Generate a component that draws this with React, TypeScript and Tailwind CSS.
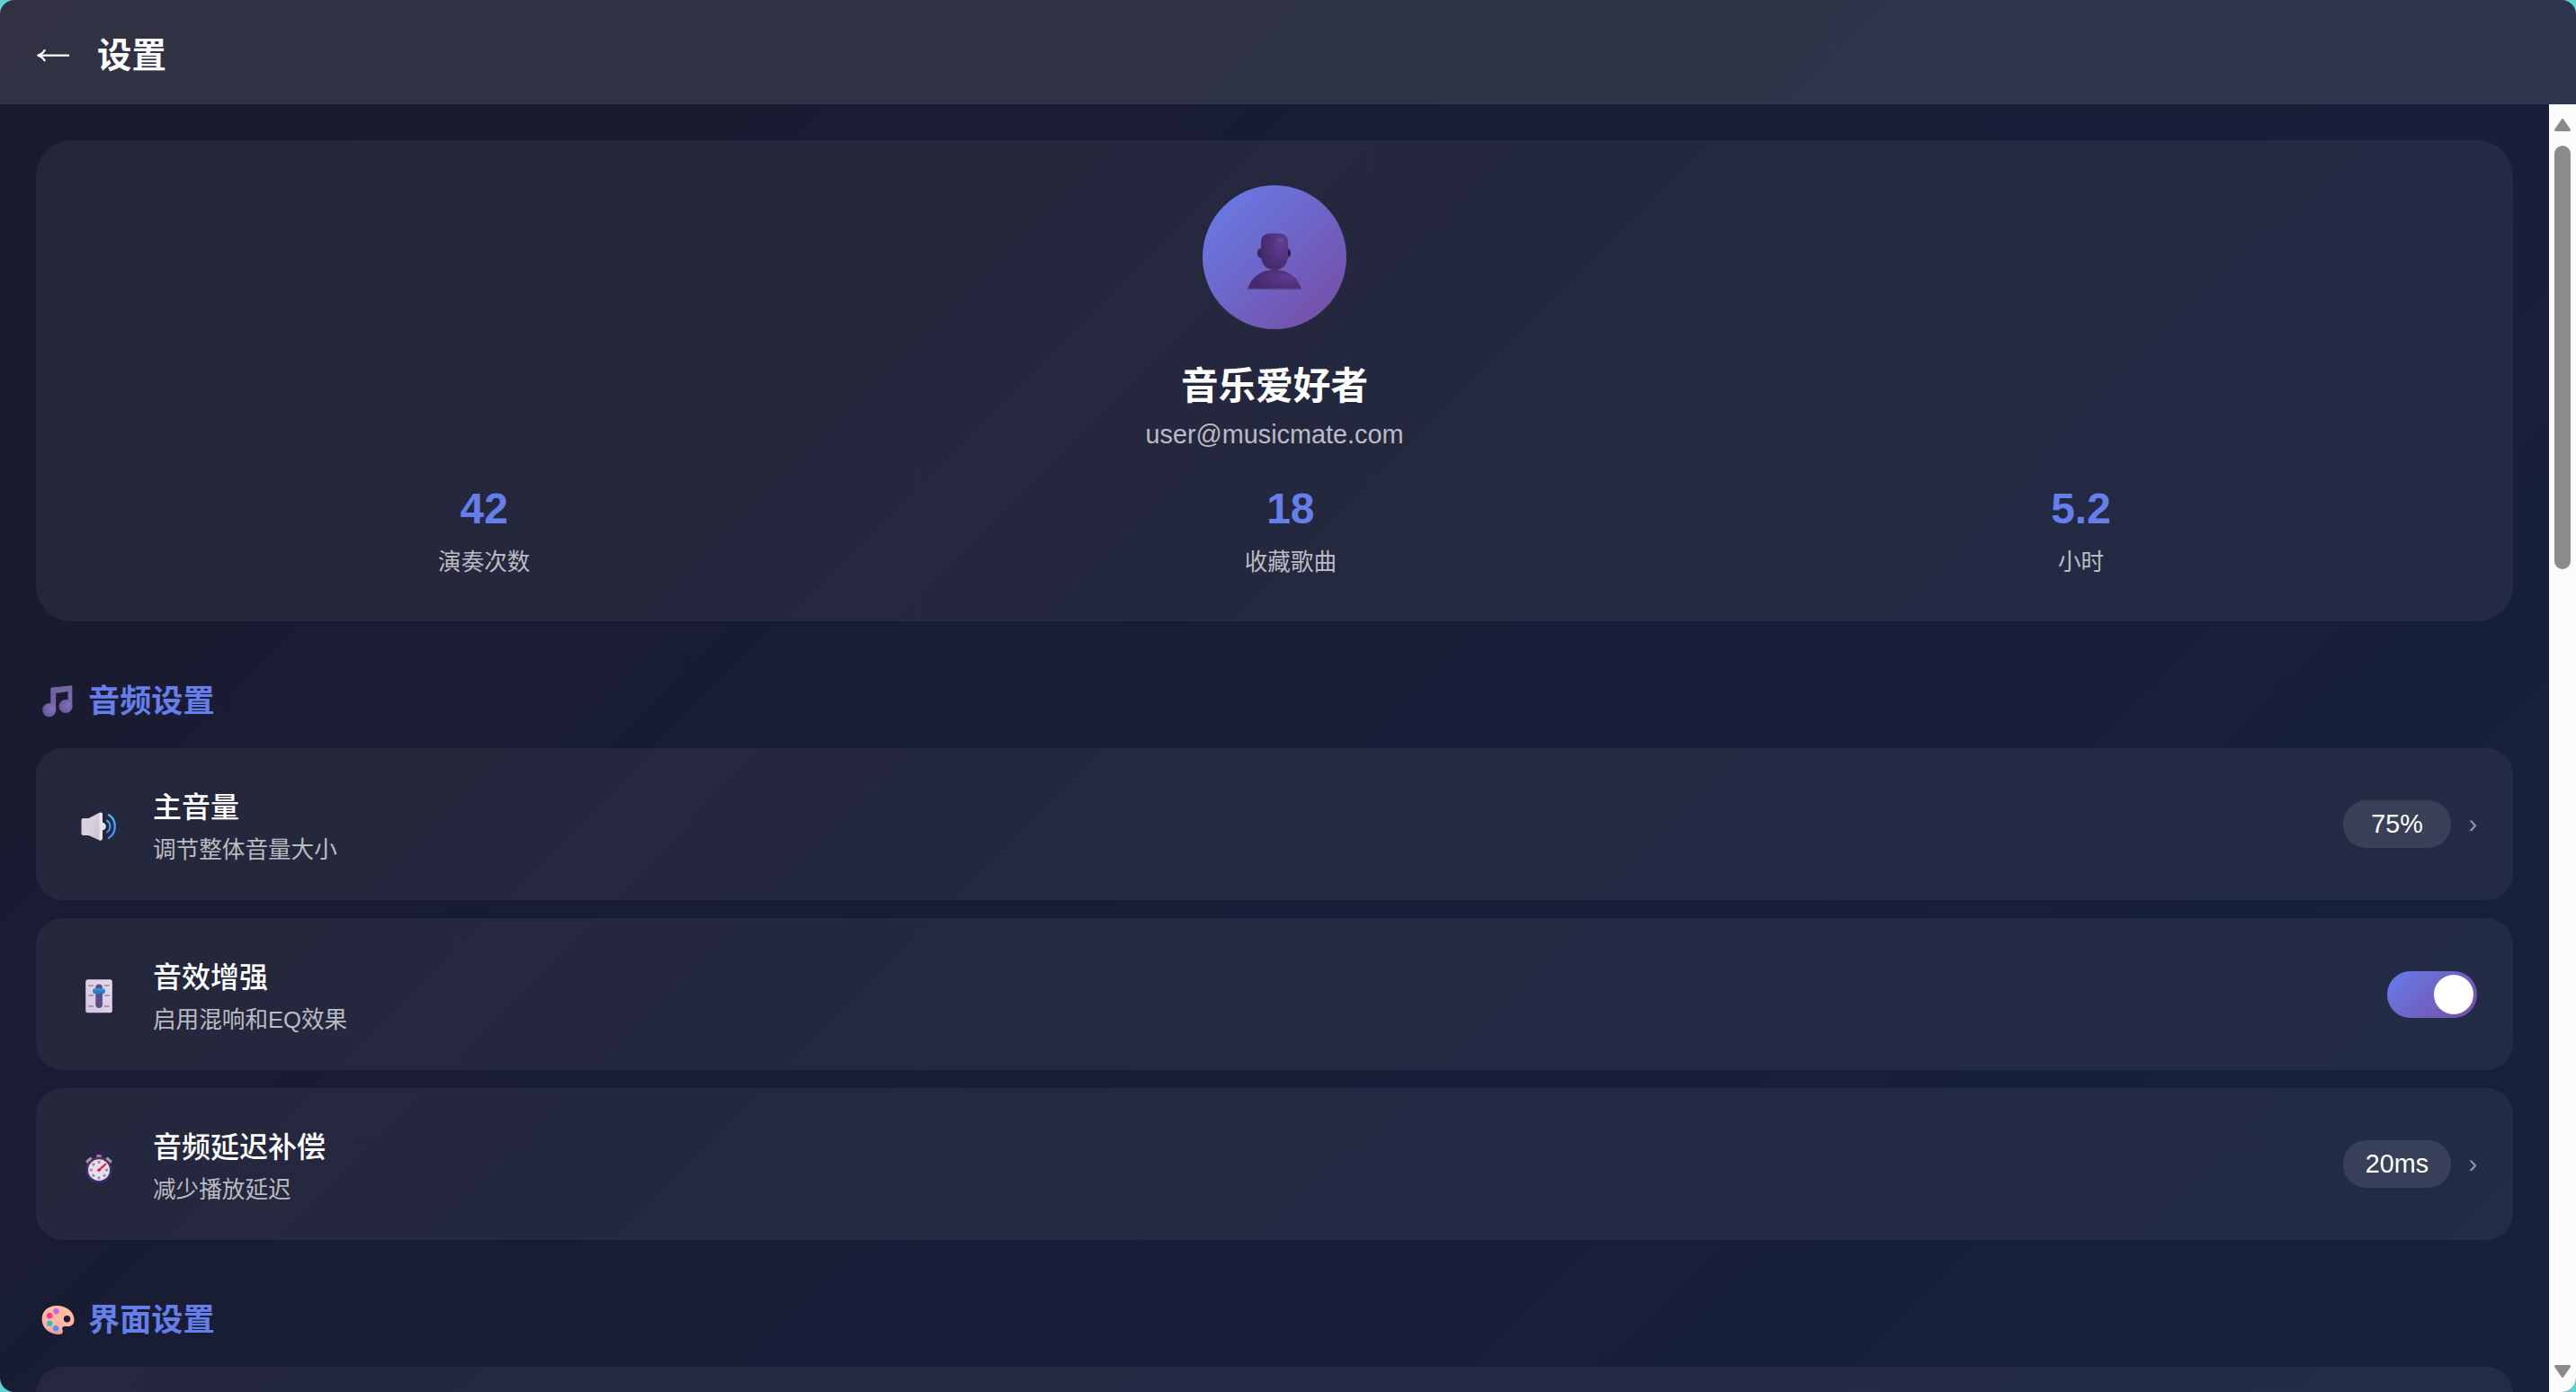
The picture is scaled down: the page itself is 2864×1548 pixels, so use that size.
import React from "react";

function BackArrow() {
  return (
    <svg className="h-[16px] w-[38px]" viewBox="0 0 38 16" fill="none">
      <path d="M3 7.7H37" stroke="#fff" strokeWidth="2.3" />
      <path d="M10 1.2C8.200 4.600 5.200 6.900 2 7.700C5.200 8.500 8.200 10.600 10 14" stroke="#fff" strokeWidth="2.3" />
      <path d="M.6 7.7L5 5.600V9.800Z" fill="#fff" />
    </svg>
  );
}

function PersonIcon() {
  return (
    <svg className="h-[64px] w-[60px]" viewBox="0 0 60 64">
      <defs>
        <radialGradient id="head" cx=".75" cy=".3" r=".75">
          <stop offset="0" stopColor="#603c93" />
          <stop offset="1" stopColor="#462a6b" />
        </radialGradient>
        <radialGradient id="shine">
          <stop offset="0" stopColor="#71509f" />
          <stop offset="1" stopColor="#603c93" stopOpacity="0" />
        </radialGradient>
        <radialGradient id="torso" cx=".75" cy=".4" r=".7">
          <stop offset="0" stopColor="#5e3b90" />
          <stop offset="1" stopColor="#45296a" />
        </radialGradient>
      </defs>
      <ellipse cx="14.500" cy="22.500" rx="3.700" ry="5.200" fill="#3b2463" />
      <ellipse cx="45" cy="22.500" rx="3.300" ry="5" fill="#3f286b" />
      <ellipse cx="45.600" cy="22.500" rx="1.500" ry="3" fill="#281848" />
      <path d="M0 63C4 48 16 41 30 41S56 48 60 63Z" fill="url(#torso)" />
      <path d="M0 63L.5 61.500H59.500L60 63Z" fill="#5a4090" />
      <path d="M15 11Q15 .5 26 .5H34Q45 .5 45 11V25Q44 41 30 41T15 25Z" fill="url(#head)" />
      <ellipse cx="37" cy="8" rx="7" ry="4" fill="url(#shine)" />
    </svg>
  );
}

function MusicIcon() {
  return (
    <svg className="h-[36px] w-[34px]" viewBox="0 0 34 36">
      <defs>
        <radialGradient id="note" cx=".7" cy=".4" r=".7">
          <stop offset="0" stopColor="#8570c2" />
          <stop offset="1" stopColor="#665699" />
        </radialGradient>
        <linearGradient id="stem" x1="0" y1="0" x2="1" y2="1">
          <stop offset="0" stopColor="#6d5f9e" />
          <stop offset="1" stopColor="#7b6eb0" />
        </linearGradient>
      </defs>
      <path d="M9.300 4Q9.300 2.700 10.600 2.500L33.300 .2V23H28.500V7L15.200 9V28H9.300Z" fill="url(#stem)" />
      <path d="M10 3.500L33 1.500V5L10 7.500Z" fill="#78669f" opacity=".7" />
      <ellipse cx="7.700" cy="27.600" rx="7.500" ry="7.600" fill="url(#note)" />
      <ellipse cx="26" cy="23.500" rx="7.600" ry="7.500" fill="url(#note)" />
    </svg>
  );
}

function PaletteIcon() {
  return (
    <svg className="h-[34px] w-[37px]" viewBox="0 0 37 34">
      <defs>
        <linearGradient id="wood" x1="0" y1="0" x2="0" y2="1">
          <stop offset="0" stopColor="#ffbd9e" />
          <stop offset=".8" stopColor="#ffb2a5" />
          <stop offset="1" stopColor="#e88f9b" />
        </linearGradient>
      </defs>
      <path
        fillRule="evenodd"
        d="M17 1C28 1 36.500 8 36.500 16.500C36.500 21.500 33.500 24.300 29 24H25.500C23.200 24.300 22.500 26 23.600 28.300C24.600 31 23.300 33 20 33C9 33 .6 26 .6 16C.6 7.500 7 1 17 1ZM28.500 12A3.700 3.700 0 1 0 28.600 19.400A3.700 3.700 0 1 0 28.500 12Z"
        fill="url(#wood)"
      />
      <circle cx="16.500" cy="7.200" r="3.200" fill="#c267f0" />
      <circle cx="9.200" cy="12.200" r="3.200" fill="#f63b8c" />
      <circle cx="9.200" cy="20.700" r="3.200" fill="#43b9b7" />
      <circle cx="16" cy="26.300" r="3.300" fill="#4a9bf5" />
    </svg>
  );
}

function SpeakerIcon() {
  return (
    <svg className="h-[32px] w-[40px]" viewBox="0 0 40 32">
      <defs>
        <linearGradient id="cone" x1="0" y1="0" x2="1" y2="1">
          <stop offset="0" stopColor="#dcd8df" />
          <stop offset="1" stopColor="#cbbfd3" />
        </linearGradient>
        <linearGradient id="wave" x1="0" y1="0" x2="0" y2="1">
          <stop offset="0" stopColor="#4cb4fa" />
          <stop offset="1" stopColor="#3f87ea" />
        </linearGradient>
      </defs>
      <path d="M.5 9Q.5 7 2.500 7H9V26H2.500Q.5 26 .5 24Z" fill="#d8d0dd" />
      <path d="M8.500 7L20 .9Q24 -.4 24 3.500V28Q24 32.500 20 31.200L8.500 26Z" fill="url(#cone)" />
      <path d="M20.500 1Q24 -.3 24 3.500V28Q24 32.500 20.500 31.200Z" fill="#e9e4ec" />
      <path d="M24 11.500Q27.800 12.500 27.800 16T24 20.500Z" fill="#e5e0ea" />
      <path d="M29 9.500Q32.500 12 32.500 16T29 22.500" fill="none" stroke="url(#wave)" strokeWidth="2" strokeLinecap="round" />
      <path d="M31 3.200C40 8.500 40 23.500 31 28.800" fill="none" stroke="url(#wave)" strokeWidth="2.400" strokeLinecap="round" />
    </svg>
  );
}

function SliderIcon() {
  return (
    <svg className="h-[38px] w-[30px]" viewBox="0 0 30 38">
      <defs>
        <linearGradient id="panel" x1="1" y1="0" x2="0" y2="1">
          <stop offset="0" stopColor="#e2dbe9" />
          <stop offset="1" stopColor="#d6c4e6" />
        </linearGradient>
        <linearGradient id="knob" x1="0" y1="0" x2="0" y2="1">
          <stop offset="0" stopColor="#359bd6" />
          <stop offset="1" stopColor="#2a6fc0" />
        </linearGradient>
      </defs>
      <rect x=".2" y=".3" width="29.600" height="37" rx="2.500" fill="url(#panel)" />
      <path d="M4 7H8.500M21.500 7H26M4 18H8.500M21.500 18H26M4 30H8.500M21.500 30H26" stroke="#93899f" strokeWidth="1.600" strokeLinecap="round" />
      <rect x="11.300" y="5.500" width="7.600" height="26.500" rx="3.800" fill="#5d4b85" />
      <rect x="8" y="10" width="14" height="6.200" rx="3.100" fill="url(#knob)" />
    </svg>
  );
}

function StopwatchIcon() {
  return (
    <svg className="h-[38px] w-[30px]" viewBox="0 0 30 38">
      <defs>
        <linearGradient id="rim" x1="0" y1="0" x2="0" y2="1">
          <stop offset="0" stopColor="#5b2b63" />
          <stop offset="1" stopColor="#2f3272" />
        </linearGradient>
      </defs>
      <rect x="12.300" y="5" width="5.400" height="5" fill="#8d8794" />
      <rect x="9.500" y=".4" width="11" height="5.600" rx="1.500" fill="#3a1c54" />
      <path d="M.3 13L5.500 8.600L8 11L2 16ZM29.700 13L24.500 8.600L22 11L28 16Z" fill="#a09ba8" />
      <circle cx="15" cy="23.200" r="14.400" fill="url(#rim)" />
      <circle cx="15" cy="23.200" r="11.900" fill="#e7dff0" />
      <path
        d="M15 13V16M15 30.500V33.500M4.800 23.200H7.800M22.200 23.200H25.200M7.900 16.100L9.900 18.100M20.100 28.300L22.100 30.300M7.900 30.300L9.900 28.300"
        stroke="#948b9d"
        strokeWidth="2.800"
      />
      <path d="M15 23.300L22.200 16.600" stroke="#e0284e" strokeWidth="2.300" strokeLinecap="round" />
      <circle cx="15" cy="23.300" r="1.700" fill="#d11f5a" />
    </svg>
  );
}

function Stat({ value, label }: { value: string; label: string }) {
  return (
    <div className="text-center">
      <div className="h-[56px] text-[48px] leading-[56px] font-bold text-[#667eea]">{value}</div>
      <div className="mt-[11px] h-10 text-[25.6px] leading-10 text-white/70">{label}</div>
    </div>
  );
}

function SectionTitle({ icon, children }: { icon: React.ReactNode; children: React.ReactNode }) {
  return (
    <h2 className="flex h-[50px] items-center pl-1 text-[35.2px] leading-[50px] font-semibold text-[#667eea]">
      <span className="flex w-[40px] justify-center">{icon}</span>
      <span className="ml-[14px]">{children}</span>
    </h2>
  );
}

function ValueBadge({ children }: { children: React.ReactNode }) {
  return (
    <div className="flex items-center gap-5">
      <span className="h-[53px] w-[120px] rounded-[26px] bg-white/10 text-center text-[28.8px] leading-[53px]">{children}</span>
      <span className="flex w-[9px] justify-end text-[28.8px] leading-[53px] text-white/50">›</span>
    </div>
  );
}

function Toggle() {
  return (
    <div className="mt-px flex h-[52px] w-[100px] items-center justify-end rounded-full bg-[linear-gradient(135deg,#667eea_0%,#764ba2_100%)] p-1">
      <div className="size-[44px] rounded-full bg-white" />
    </div>
  );
}

interface RowProps {
  icon: React.ReactNode;
  title: string;
  note: string;
  control: React.ReactNode;
}

function Row({ icon, title, note, control }: RowProps) {
  return (
    <div className="flex h-[169px] items-center rounded-[30px] bg-white/5 px-10">
      <div className="mt-[4px] flex w-[60px] justify-center">{icon}</div>
      <div className="mt-2 ml-[30px] flex-1">
        <div className="h-[46px] text-[32px] leading-[46px] font-medium">{title}</div>
        <div className="mt-[3px] h-[42px] text-[25.6px] leading-[42px] text-white/70">{note}</div>
      </div>
      {control}
    </div>
  );
}

function Scrollbar() {
  return (
    <div className="flex w-[30px] flex-col items-center bg-[#fcfcfc] pt-[16px] pb-[16px]">
      <svg className="h-[14px] w-[18px]" viewBox="0 0 18 14">
        <path d="M9 1.500L16.500 12.500H1.500Z" fill="#8b8b8b" stroke="#8b8b8b" strokeWidth="3" strokeLinejoin="round" />
      </svg>
      <div className="mt-[16px] h-[471px] w-[18px] rounded-full bg-[#8b8b8b]" />
      <svg className="mt-auto h-[14px] w-[18px]" viewBox="0 0 18 14">
        <path d="M9 12.500L16.500 1.500H1.500Z" fill="#8b8b8b" stroke="#8b8b8b" strokeWidth="3" strokeLinejoin="round" />
      </svg>
    </div>
  );
}

export default function App() {
  return (
    <div className="h-[1548px] w-[2864px] overflow-hidden bg-[#5fd3cf] font-['Liberation_Sans','Noto_Sans_CJK_SC',sans-serif] text-white">
      <div className="flex h-full flex-col overflow-hidden rounded-[16px] bg-[linear-gradient(135deg,#1a1a2e_0%,#16213e_100%)]">
        <header className="flex h-[116px] shrink-0 items-center bg-white/10 pt-[7px] pl-10">
          <BackArrow />
          <h1 className="ml-[30px] text-[38.4px] leading-[56px] font-bold">设置</h1>
        </header>
        <div className="flex min-h-0 flex-1">
          <main className="flex-1 overflow-hidden px-10 pt-10">
            <section className="h-[535px] rounded-[40px] bg-white/5 p-[50px]">
              <div className="mx-auto flex size-40 items-center justify-center rounded-full bg-[linear-gradient(135deg,#667eea_0%,#764ba2_100%)] pt-2.5">
                <PersonIcon />
              </div>
              <div className="mt-[39px] h-[50px] text-center text-[41.6px] leading-[50px] font-bold">音乐爱好者</div>
              <div className="mt-2 h-10 text-center text-[28.8px] leading-10 text-white/70">user@musicmate.com</div>
              <div className="mt-[35px] flex justify-around">
                <Stat value="42" label="演奏次数" />
                <Stat value="18" label="收藏歌曲" />
                <Stat value="5.2" label="小时" />
              </div>
            </section>
            <section className="mt-[64px]">
              <SectionTitle icon={<MusicIcon />}>音频设置</SectionTitle>
              <div className="mt-[27px] flex flex-col gap-5">
                <Row icon={<SpeakerIcon />} title="主音量" note="调节整体音量大小" control={<ValueBadge>75%</ValueBadge>} />
                <Row icon={<SliderIcon />} title="音效增强" note="启用混响和EQ效果" control={<Toggle />} />
                <Row icon={<StopwatchIcon />} title="音频延迟补偿" note="减少播放延迟" control={<ValueBadge>20ms</ValueBadge>} />
              </div>
            </section>
            <section className="mt-[64px]">
              <SectionTitle icon={<PaletteIcon />}>界面设置</SectionTitle>
              <div className="mt-[27px] h-[169px] rounded-[30px] bg-white/5" />
            </section>
          </main>
          <Scrollbar />
        </div>
      </div>
    </div>
  );
}
